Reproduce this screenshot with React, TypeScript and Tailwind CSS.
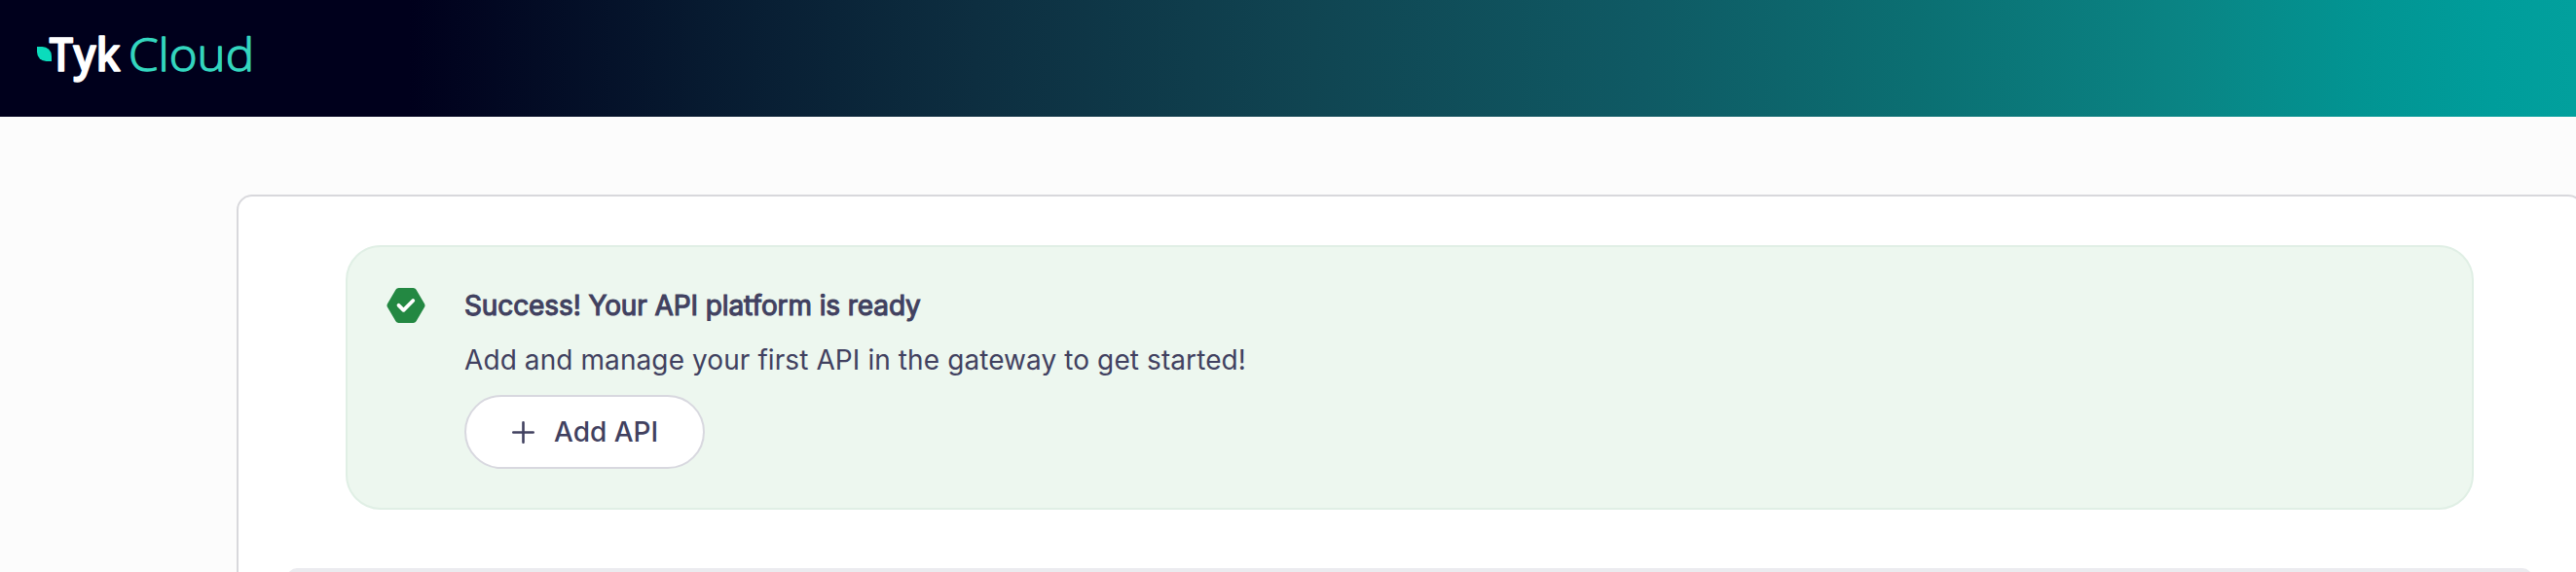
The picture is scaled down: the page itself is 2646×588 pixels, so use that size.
function Logo() {
  return (
    <svg width="240" height="76" viewBox="0 -8 240 76" className="overflow-visible" role="img" aria-label="Tyk Cloud">
      <path d="M4 18h5.500a9.500 9.500 0 0 1 9.500 9.500V33h-5.500A9.500 9.500 0 0 1 4 23.500z" fill="#0bdcbc" />
      <text x="16.500" y="43" fontFamily="'Open Sans', sans-serif" fontWeight="600" fontSize="47" textLength="73" lengthAdjust="spacingAndGlyphs" fill="#ffffff" stroke="#ffffff" strokeWidth="1.500" strokeLinejoin="round">Tyk</text>
      <text x="98" y="42.500" fontFamily="'Open Sans', sans-serif" fontWeight="300" fontSize="46" textLength="129" lengthAdjust="spacingAndGlyphs" fill="#34d6bf" stroke="#34d6bf" strokeWidth="1.300" strokeLinejoin="round">Cloud</text>
    </svg>
  );
}

function SuccessIcon() {
  return (
    <svg width="40" height="38" viewBox="0 0 40 38" className="shrink-0" aria-hidden="true">
      <path d="M12.500 4.500h15L36 19l-8.500 14.500h-15L4 19z" fill="#238842" stroke="#238842" strokeWidth="7" strokeLinejoin="round" />
      <path d="M12.500 18.800l5 5L27.300 14" fill="none" stroke="#ffffff" strokeWidth="3.800" strokeLinecap="round" strokeLinejoin="round" />
    </svg>
  );
}

export default function App() {
  return (
    <div className="flex h-[588px] w-[2646px] flex-col overflow-hidden bg-[#fcfcfc] font-['Inter',sans-serif] text-[28px] leading-[34px] text-[#414160]">
      <header className="h-[120px] shrink-0 bg-[linear-gradient(90deg,#00001c_0px,#00001c_420px,#071a30_720px,#0d2e40_1000px,#104552_1350px,#0f5a64_1690px,#0b6f72_1970px,#0a8484_2240px,#029492_2420px,#009d9b_2560px,#02a09d_2646px)] pt-[22px] pl-[34px]">
        <Logo />
      </header>
      <main className="mt-20 ml-[243px] h-[700px] w-[2411px] shrink-0 rounded-2xl border-2 border-[#d8d8dc] bg-white pt-[50px]">
        <section className="ml-[110px] flex h-[272px] w-[2186px] rounded-[36px] border-2 border-[#e0efe5] bg-[#edf7ef] pt-[41px] pl-[40px]">
          <SuccessIcon />
          <div className="ml-[40px] flex flex-col items-start">
            <h1 className="mt-[2px] font-normal whitespace-nowrap tracking-[-0.1px] [-webkit-text-stroke:1.1px_#414160]">Success! Your API platform is ready</h1>
            <p className="mt-[22px] whitespace-nowrap tracking-[0.09px]">Add and manage your first API in the gateway to get started!</p>
            <button className="mt-[19px] flex h-[76px] w-[247px] items-center rounded-full border-2 border-[#d8d8df] bg-white pl-[47px] font-medium">
              <svg width="23" height="23" viewBox="0 0 23 23" aria-hidden="true">
                <path d="M11.500 1.300v20.400M1.300 11.500h20.400" stroke="#414160" strokeWidth="2.600" strokeLinecap="round" />
              </svg>
              <span className="ml-[20px] whitespace-nowrap">Add API</span>
            </button>
          </div>
        </section>
        <div className="mt-[60px] ml-[50px] h-[80px] w-[2306px] rounded-[10px] bg-[#ebebef]" />
      </main>
    </div>
  );
}
